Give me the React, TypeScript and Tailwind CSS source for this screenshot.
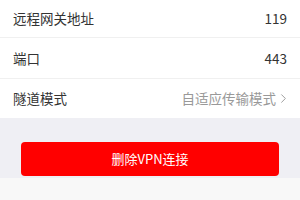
import { ChevronRight } from "lucide-react";

const font = { fontFamily: '"Noto Sans CJK SC", "Noto Sans", sans-serif' };

interface RowProps {
  label: string;
  value: string;
  muted?: boolean;
  arrow?: boolean;
  className?: string;
}

function Row({ label, value, muted, arrow, className = "" }: RowProps) {
  return (
    <div className={`flex items-center justify-between pl-[13px] pr-[13px] bg-white ${className}`}>
      <span className="text-[13.5px] text-[#333]">{label}</span>
      <span className={`flex items-center text-[13.5px] ${muted ? "text-[#999]" : "text-[#333]"}`}>
        {value}
        {arrow && <ChevronRight className="w-[15px] h-[15px] -mr-[4px] text-[#999]" strokeWidth={1.5} />}
      </span>
    </div>
  );
}

export default function App() {
  return (
    <div className="w-[300px] h-[200px] overflow-hidden bg-[#f8f8f8]" style={font}>
      {/* Settings list */}
      <div className="bg-white">
        <Row label="远程网关地址" value="119" className="h-[38px] border-b border-[#f0f0f0]" />
        <Row label="端口" value="443" className="h-[41px] border-b border-[#f0f0f0]" />
        <Row label="隧道模式" value="自适应传输模式" muted arrow className="h-[39px]" />
      </div>

      {/* Delete button */}
      <div className="bg-[#efeff4] pt-[24px] pb-[2px] px-[21px]">
        <button className="w-full h-[34px] rounded-[4px] bg-[#ff0000] text-white text-[13px]">
          删除VPN连接
        </button>
      </div>
    </div>
  );
}
